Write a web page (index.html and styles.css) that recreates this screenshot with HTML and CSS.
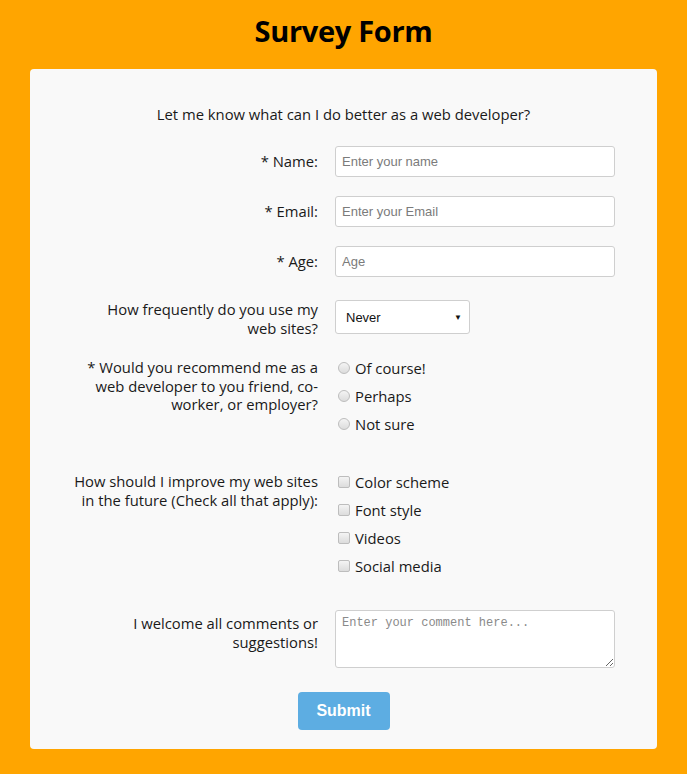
FILE: index.html
```html
<!DOCTYPE html>
<html lang="en">
<head>
<meta charset="utf-8">
<title>Survey Form</title>
<link rel="stylesheet" href="styles.css">
</head>
<body>
<h1 class="title">Survey Form</h1>
<form class="card">
  <p class="intro">Let me know what can I do better as a web developer?</p>

  <div class="row row-input">
    <label class="label" for="name">* Name:</label>
    <input class="field" id="name" type="text" placeholder="Enter your name">
  </div>
  <div class="row row-input">
    <label class="label" for="email">* Email:</label>
    <input class="field" id="email" type="email" placeholder="Enter your Email">
  </div>
  <div class="row row-input row-age">
    <label class="label" for="age">* Age:</label>
    <input class="field" id="age" type="number" placeholder="Age">
  </div>

  <div class="row row-select">
    <label class="label label-top" for="freq">How frequently do you use my<br>web sites?</label>
    <div class="select-wrap">
      <select class="select" id="freq">
        <option>Never</option>
        <option>Rarely</option>
        <option>Sometimes</option>
        <option>Often</option>
      </select>
      <span class="caret">&#9660;</span>
    </div>
  </div>

  <div class="row row-list row-radios">
    <div class="label label-top label-list">* Would you recommend me as a web developer to you friend, co-worker, or employer?</div>
    <ul class="options">
      <li class="option"><input class="radio" type="radio" name="rec" id="r1"><label for="r1">Of course!</label></li>
      <li class="option"><input class="radio" type="radio" name="rec" id="r2"><label for="r2">Perhaps</label></li>
      <li class="option"><input class="radio" type="radio" name="rec" id="r3"><label for="r3">Not sure</label></li>
    </ul>
  </div>

  <div class="row row-list row-checks">
    <div class="label label-top label-list">How should I improve my web sites in the future (Check all that apply):</div>
    <ul class="options">
      <li class="option"><input class="check" type="checkbox" id="c1"><label for="c1">Color scheme</label></li>
      <li class="option"><input class="check" type="checkbox" id="c2"><label for="c2">Font style</label></li>
      <li class="option"><input class="check" type="checkbox" id="c3"><label for="c3">Videos</label></li>
      <li class="option"><input class="check" type="checkbox" id="c4"><label for="c4">Social media</label></li>
    </ul>
  </div>

  <div class="row row-comment">
    <label class="label label-top label-comment" for="comment">I welcome all comments or suggestions!</label>
    <textarea class="comment" id="comment" placeholder="Enter your comment here..."></textarea>
  </div>

  <div class="actions">
    <button class="submit" type="submit">Submit</button>
  </div>
</form>
</body>
</html>
```

FILE: styles.css
```css
* { box-sizing: border-box; }

html, body {
  margin: 0;
  padding: 0;
}

body {
  background: #ffa500;
  font-family: "Open Sans", "Noto Sans", sans-serif;
  font-size: 14.8px;
  color: #1a1a1a;
  padding: 0 30px 25px;
}

.title {
  margin: 0;
  padding-top: 11px;
  height: 69px;
  text-align: center;
  font-size: 29px;
  line-height: 40px;
  font-weight: 700;
  color: #000;
  letter-spacing: -0.3px;
}

.card {
  background: #f9f9f9;
  border-radius: 4px;
  padding: 36px 0 19px;
}

.intro {
  margin: 0 0 23px;
  text-align: center;
  line-height: 18px;
}

.row {
  display: grid;
  grid-template-columns: 250px 280px;
  column-gap: 17px;
  padding-left: 38px;
  align-items: start;
}

.label {
  text-align: right;
  line-height: 18.5px;
}

.row-input {
  align-items: center;
  margin-bottom: 19px;
}

.row-age { margin-bottom: 23px; }

.row-select { margin-bottom: 20px; }

.label-list { padding-top: 1px; }

.row-radios { margin-bottom: 33px; }
.row-checks { margin-bottom: 30px; }

.field {
  width: 280px;
  height: 31px;
  border: 1px solid #cfcfcf;
  border-radius: 3px;
  background: #fff;
  padding: 0 6px;
  font-family: "Liberation Sans", Arial, sans-serif;
  font-size: 13px;
  color: #222;
}

.field::placeholder { color: #7b7b7b; }

.select-wrap {
  position: relative;
  width: 135px;
  height: 34px;
}

.select {
  appearance: none;
  -webkit-appearance: none;
  width: 135px;
  height: 34px;
  border: 1px solid #cfcfcf;
  border-radius: 3px;
  background: #fff;
  padding: 0 10px;
  font-family: "Liberation Sans", Arial, sans-serif;
  font-size: 13px;
  color: #111;
}

.caret {
  position: absolute;
  right: 8px;
  top: 12px;
  font-size: 8px;
  line-height: 10px;
  color: #111;
  pointer-events: none;
}

.options {
  list-style: none;
  margin: 0;
  padding: 0;
}

.option {
  display: flex;
  align-items: center;
  height: 28px;
  line-height: 18px;
}

.option:first-child { margin-top: -3px; }

.radio, .check {
  appearance: none;
  -webkit-appearance: none;
  margin: 0 5px 0 3px;
  width: 12px;
  height: 12px;
  border: 1px solid #bdbdbd;
  background: linear-gradient(#f4f4f4, #dcdcdc);
  flex: none;
}

.radio { border-radius: 50%; }
.check { border-radius: 2px; }

.comment {
  width: 280px;
  height: 58px;
  border: 1px solid #cfcfcf;
  border-radius: 3px;
  background: #fff;
  padding: 5px 6px;
  font-family: "Liberation Mono", "DejaVu Sans Mono", monospace;
  font-size: 12px;
  color: #222;
  resize: both;
}

.comment::placeholder { color: #8a8a8a; }

.row-comment { margin-bottom: 24px; }
.label-comment { padding-top: 4px; }

.actions {
  display: flex;
  justify-content: center;
}

.submit {
  width: 92px;
  height: 38px;
  border: none;
  border-radius: 4px;
  background: #5dade2;
  color: #fff;
  font-family: "Liberation Sans", Arial, sans-serif;
  font-weight: 700;
  font-size: 16px;
  cursor: pointer;
}
```
